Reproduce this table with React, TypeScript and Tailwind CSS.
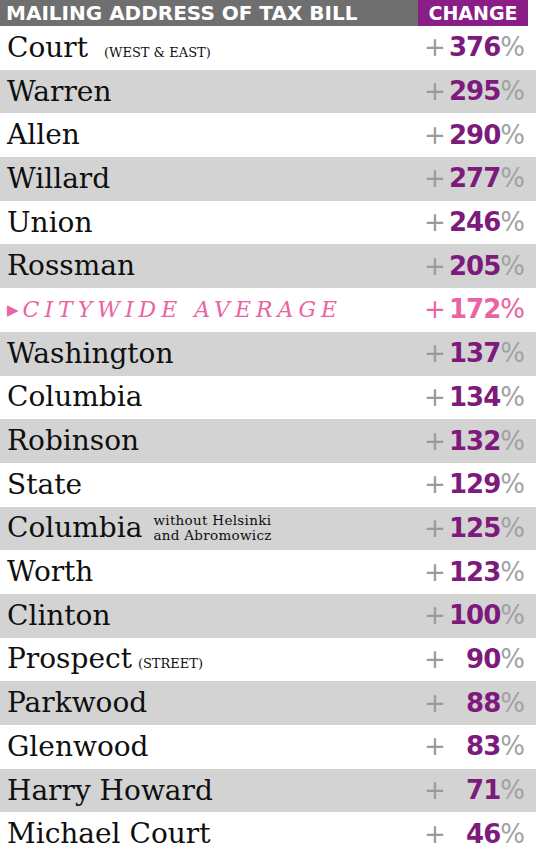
import React from "react";

type Row = {
  name: string;
  value: number;
  note?: string;
  note2?: [string, string];
  avg?: boolean;
};

const rows: Row[] = [
  { name: "Court", note: "(WEST & EAST)", value: 376 },
  { name: "Warren", value: 295 },
  { name: "Allen", value: 290 },
  { name: "Willard", value: 277 },
  { name: "Union", value: 246 },
  { name: "Rossman", value: 205 },
  { name: "CITYWIDE AVERAGE", value: 172, avg: true },
  { name: "Washington", value: 137 },
  { name: "Columbia", value: 134 },
  { name: "Robinson", value: 132 },
  { name: "State", value: 129 },
  { name: "Columbia", note2: ["without Helsinki", "and Abromowicz"], value: 125 },
  { name: "Worth", value: 123 },
  { name: "Clinton", value: 100 },
  { name: "Prospect", note: "(STREET)", value: 90 },
  { name: "Parkwood", value: 88 },
  { name: "Glenwood", value: 83 },
  { name: "Harry Howard", value: 71 },
  { name: "Michael Court", value: 46 },
];

export default function App() {
  return (
    <div className="w-[536px] h-[856px] flex flex-col bg-white overflow-hidden">
      {/* header */}
      <div className="h-[26px] shrink-0 flex font-['DejaVu_Sans',sans-serif] font-bold text-white text-[20px] leading-none">
        <div className="w-[418px] bg-[#6f6f6f] pl-[6px] flex items-center">
          MAILING ADDRESS OF TAX BILL
        </div>
        <div className="w-[110px] bg-[#8a1e86] flex items-center justify-center text-[19px]">
          CHANGE
        </div>
      </div>

      {rows.map((r, i) => (
        <div
          key={i}
          className={`flex-1 flex items-center ${i % 2 === 1 ? "bg-[#d3d3d3]" : "bg-white"}`}
        >
          <div className="w-[418px] pl-[7px] flex items-baseline font-['DejaVu_Serif',serif] text-[#0f0f0f]">
            {r.avg ? (
              <div className="flex items-center text-[#ea64a4]">
                <span className="text-[15px] mr-[4px]">▶</span>
                <span className="italic text-[22px] tracking-[5px]">{r.name}</span>
              </div>
            ) : (
              <span className="text-[28px]">{r.name}</span>
            )}
            {r.note && (
              <span className={`text-[13px] ${r.name === "Court" ? "ml-[16px]" : "ml-[6px]"}`}>
                {r.note}
              </span>
            )}
            {r.note2 && (
              <span className="ml-[11px] self-center flex flex-col text-[13.5px] leading-[15.5px] tracking-[0.3px]">
                <span>{r.note2[0]}</span>
                <span>{r.note2[1]}</span>
              </span>
            )}
          </div>
          <div className="w-[110px] pl-[6px] pr-[3px] flex items-baseline font-['DejaVu_Sans',sans-serif]">
            <span className={`text-[26px] ${r.avg ? "text-[#ea64a4]" : "text-[#9a9a9a]"}`}>+</span>
            <span
              className={`flex-1 text-right font-bold text-[26px] tracking-[-1px] ${
                r.avg ? "text-[#ea64a4]" : "text-[#7c1b7b]"
              }`}
            >
              {r.value}
            </span>
            <span className={`text-[26px] ${r.avg ? "text-[#ea64a4]" : "text-[#a2a2a2]"}`}>%</span>
          </div>
        </div>
      ))}
    </div>
  );
}
